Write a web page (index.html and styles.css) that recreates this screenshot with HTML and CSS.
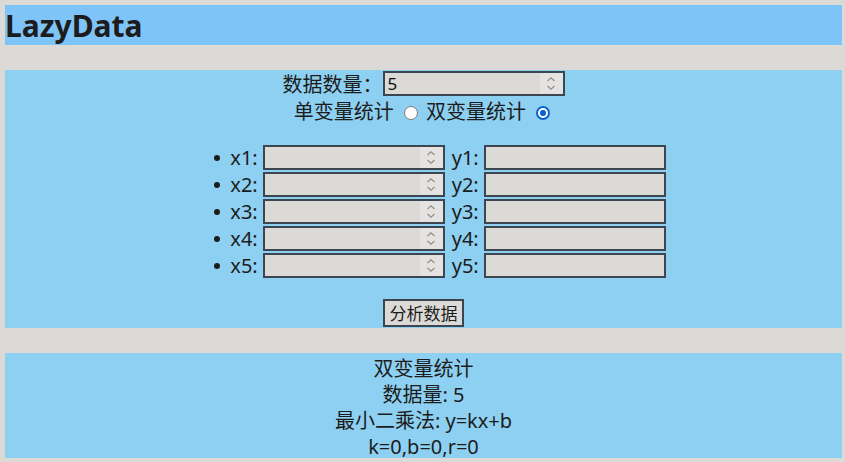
FILE: index.html
```html
<!DOCTYPE html>
<html lang="zh">
<head>
<meta charset="utf-8">
<title>LazyData</title>
<link rel="stylesheet" href="styles.css">
</head>
<body>
<header class="topbar"><h1 class="title">LazyData</h1></header>

<section class="panel form-panel">
  <div class="count-row">
    <label class="label">数据数量：</label>
    <span class="num"><input class="num-input" type="text" value="5"><span class="spin"><svg width="22" height="21" viewBox="0 0 22 21"><path d="M7.5 8 L11 4.8 L14.5 8 M7.5 13 L11 16.2 L14.5 13" fill="none" stroke="#8d8d8d" stroke-width="1.1"/></svg></span></span>
  </div>
  <div class="mode-row">单变量统计 <input type="radio" class="radio" name="mode"> 双变量统计 <input type="radio" class="radio" name="mode" checked></div>
  <ul class="pairs">
    <li class="pair"><span class="var">x1:</span><span class="num"><input class="num-input" type="text"><span class="spin"><svg width="22" height="21" viewBox="0 0 22 21"><path d="M7.5 8 L11 4.8 L14.5 8 M7.5 13 L11 16.2 L14.5 13" fill="none" stroke="#8d8d8d" stroke-width="1.1"/></svg></span></span><span class="var var-y">y1:</span><input class="text-input" type="text"></li>
    <li class="pair"><span class="var">x2:</span><span class="num"><input class="num-input" type="text"><span class="spin"><svg width="22" height="21" viewBox="0 0 22 21"><path d="M7.5 8 L11 4.8 L14.5 8 M7.5 13 L11 16.2 L14.5 13" fill="none" stroke="#8d8d8d" stroke-width="1.1"/></svg></span></span><span class="var var-y">y2:</span><input class="text-input" type="text"></li>
    <li class="pair"><span class="var">x3:</span><span class="num"><input class="num-input" type="text"><span class="spin"><svg width="22" height="21" viewBox="0 0 22 21"><path d="M7.5 8 L11 4.8 L14.5 8 M7.5 13 L11 16.2 L14.5 13" fill="none" stroke="#8d8d8d" stroke-width="1.1"/></svg></span></span><span class="var var-y">y3:</span><input class="text-input" type="text"></li>
    <li class="pair"><span class="var">x4:</span><span class="num"><input class="num-input" type="text"><span class="spin"><svg width="22" height="21" viewBox="0 0 22 21"><path d="M7.5 8 L11 4.8 L14.5 8 M7.5 13 L11 16.2 L14.5 13" fill="none" stroke="#8d8d8d" stroke-width="1.1"/></svg></span></span><span class="var var-y">y4:</span><input class="text-input" type="text"></li>
    <li class="pair"><span class="var">x5:</span><span class="num"><input class="num-input" type="text"><span class="spin"><svg width="22" height="21" viewBox="0 0 22 21"><path d="M7.5 8 L11 4.8 L14.5 8 M7.5 13 L11 16.2 L14.5 13" fill="none" stroke="#8d8d8d" stroke-width="1.1"/></svg></span></span><span class="var var-y">y5:</span><input class="text-input" type="text"></li>
  </ul>
  <div class="actions"><button class="btn" type="button">分析数据</button></div>
</section>

<section class="panel result-panel">
  <div class="line">双变量统计</div>
  <div class="line">数据量: 5</div>
  <div class="line">最小二乘法: y=kx+b</div>
  <div class="line">k=0,b=0,r=0</div>
</section>
</body>
</html>
```
FILE: styles.css
```css
html { background: #dcdad7; }
body {
  margin: 5px 3px 0 5px;
  font-family: "Noto Sans", "Noto Sans CJK SC", sans-serif;
  font-size: 20px;
  line-height: 26px;
  color: #1c1c1c;
}
.topbar { background: #7fc4f8; height: 40px; }
.title {
  margin: 0;
  font-size: 30px;
  line-height: 42px;
  height: 40px;
  font-weight: 700;
  padding-left: 0;
}
.panel { background: #8ed0f1; margin-top: 25px; text-align: center; }
.form-panel { padding-bottom: 1px; }
.count-row {
  display: flex;
  justify-content: center;
  align-items: flex-start;
  height: 27px;
  padding-top: 1px;
}
.label { line-height: 27px; }
.num {
  display: inline-flex;
  width: 182px;
  height: 25px;
  box-sizing: border-box;
  border: 2px solid #3b4650;
  background: #dcdad7;
}
.num-input {
  flex: 1;
  min-width: 0;
  border: 0;
  margin: 0;
  padding: 0 0 0 3px;
  background: transparent;
  font-family: "Noto Sans", sans-serif;
  font-size: 17px;
  color: #111;
  outline: none;
}
.spin { width: 23px; background: #e4e3e1; display: flex; align-items: center; justify-content: center; }
.spin svg { display: block; }
.mode-row { height: 26px; line-height: 28px; }
.radio {
  appearance: none;
  -webkit-appearance: none;
  width: 14px;
  height: 14px;
  margin: 0 3px 0 5px;
  box-sizing: border-box;
  border: 1px solid #7a7a7a;
  border-radius: 50%;
  background: #fff;
  vertical-align: -1px;
}
.radio:checked {
  border: 2px solid #0c62cf;
  background: radial-gradient(circle, #0c62cf 0 2.8px, #fff 3.4px);
}
.pairs { list-style: none; margin: 20px 0 0; padding: 0 0 0 33px; }
.pair {
  display: flex;
  justify-content: center;
  align-items: center;
  height: 27px;
}
.pair::before {
  content: "";
  width: 6px;
  height: 6px;
  border-radius: 50%;
  background: #1c1c1c;
  margin-right: 10px;
}
.var { margin-right: 5px; }
.var-y { margin-left: 7px; }
.text-input {
  width: 182px;
  height: 25px;
  box-sizing: border-box;
  border: 2px solid #3b4650;
  background: #dcdad7;
  margin: 0;
  padding: 0 3px;
  font-size: 17px;
  outline: none;
}
.actions { margin-top: 20px; display: flex; justify-content: center; }
.btn {
  height: 28px;
  width: 81px;
  box-sizing: border-box;
  border: 2px solid #3b4650;
  background: #dcdad7;
  padding: 0;
  font-family: "Noto Sans CJK SC", sans-serif;
  font-size: 17px;
  line-height: 24px;
  color: #1c1c1c;
}
.result-panel { padding-bottom: 1px; }
.line { height: 26px; line-height: 32px; }
```
